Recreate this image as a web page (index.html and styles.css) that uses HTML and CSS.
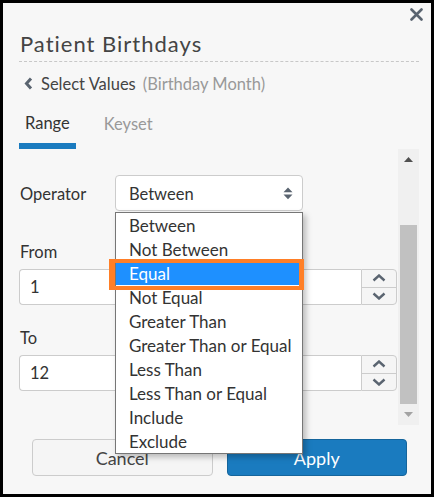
FILE: index.html
```html
<!DOCTYPE html>
<html>
<head>
<meta charset="utf-8">
<link rel="stylesheet" href="styles.css">
</head>
<body>
<div class="panel">
  <div class="topbar">
    <svg class="close" width="13" height="13" viewBox="0 0 13 13"><path d="M1.5 1.5 L11.5 11.5 M11.5 1.5 L1.5 11.5" stroke="#5a6470" stroke-width="2.6" stroke-linecap="round"/></svg>
  </div>
  <div class="title">Patient Birthdays</div>
  <div class="back">
    <svg class="chev" width="9" height="13" viewBox="0 0 9 13"><path d="M7 1.5 L2.5 6.5 L7 11.5" fill="none" stroke="#5a6470" stroke-width="3"/></svg>
    <span class="back-main">Select Values</span>
    <span class="back-sub">(Birthday Month)</span>
  </div>
  <div class="tabs">
    <div class="tab active">Range</div>
    <div class="tab">Keyset</div>
  </div>
  <div class="body">
    <div class="content">
      <div class="op-row">
        <div class="op-label">Operator</div>
        <div class="select">
          <span>Between</span>
          <svg width="10" height="13" viewBox="0 0 10 13"><path d="M5 0.5 L9.5 5.2 L0.5 5.2 Z M0.5 7.4 L9.5 7.4 L5 12.2 Z" fill="#5a6470"/></svg>
        </div>
      </div>
      <div class="label from">From</div>
      <div class="num">
        <div class="num-input">1</div>
        <div class="spin">
          <div class="spin-btn"><svg width="14" height="8" viewBox="0 0 14 8"><path d="M1.5 6.5 L7 1.5 L12.5 6.5" fill="none" stroke="#5a6470" stroke-width="2.4"/></svg></div>
          <div class="spin-btn"><svg width="14" height="8" viewBox="0 0 14 8"><path d="M1.5 1.5 L7 6.5 L12.5 1.5" fill="none" stroke="#5a6470" stroke-width="2.4"/></svg></div>
        </div>
      </div>
      <div class="label to">To</div>
      <div class="num">
        <div class="num-input">12</div>
        <div class="spin">
          <div class="spin-btn"><svg width="14" height="8" viewBox="0 0 14 8"><path d="M1.5 6.5 L7 1.5 L12.5 6.5" fill="none" stroke="#5a6470" stroke-width="2.4"/></svg></div>
          <div class="spin-btn"><svg width="14" height="8" viewBox="0 0 14 8"><path d="M1.5 1.5 L7 6.5 L12.5 1.5" fill="none" stroke="#5a6470" stroke-width="2.4"/></svg></div>
        </div>
      </div>
    </div>
    <div class="scrollbar">
      <div class="sb-arrow"><svg width="9" height="5" viewBox="0 0 9 5"><path d="M4.5 0 L9 5 L0 5 Z" fill="#505050"/></svg></div>
      <div class="sb-space"></div>
      <div class="sb-thumb"></div>
      <div class="sb-arrow"><svg width="9" height="5" viewBox="0 0 9 5"><path d="M0 0 L9 0 L4.5 5 Z" fill="#a3a3a3"/></svg></div>
    </div>
  </div>
  <div class="footer">
    <div class="btn cancel">Cancel</div>
    <div class="btn apply">Apply</div>
  </div>

  <div class="dropdown">
    <div class="opt">Between</div>
    <div class="opt">Not Between</div>
    <div class="opt sel">Equal</div>
    <div class="opt">Not Equal</div>
    <div class="opt">Greater Than</div>
    <div class="opt">Greater Than or Equal</div>
    <div class="opt">Less Than</div>
    <div class="opt">Less Than or Equal</div>
    <div class="opt">Include</div>
    <div class="opt">Exclude</div>
  </div>
  <div class="highlight"></div>
</div>
</body>
</html>
```
FILE: styles.css
```css
* { box-sizing: border-box; }
html, body { margin: 0; padding: 0; }
body {
  background: #000;
  padding: 3px 3px 3px 3px;
  width: 434px;
  height: 497px;
  font-family: "Lato", "Liberation Sans", sans-serif;
  color: #333;
}
.panel {
  position: relative;
  width: 428px;
  height: 491px;
  background: #f7f7f7;
  padding: 0 12px 0 16px;
  display: flex;
  flex-direction: column;
}
.topbar {
  height: 27px;
  display: flex;
  justify-content: flex-end;
  padding-top: 5px;
  margin-right: -4px;
}
.close { display: block; }
.title {
  height: 32px;
  line-height: 28px;
  font-size: 22px;
  letter-spacing: 1px;
  color: #444;
  padding-left: 1px;
  padding-bottom: 4px;
  border-bottom: 1px dashed #c8c8c8;
}
.back {
  height: 42px;
  display: flex;
  align-items: center;
  font-size: 16.5px;
  padding-left: 5px;
  padding-top: 1px;
}
.chev { margin-right: 8px; }
.back-main { color: #444; }
.back-sub { color: #999; margin-left: 7px; }
.tabs {
  height: 45px;
  display: flex;
  align-items: flex-end;
  gap: 22px;
}
.tab {
  font-size: 16.5px;
  color: #999;
  padding: 0 6px;
  height: 44px;
  line-height: 38px;
  border-bottom: 6px solid transparent;
}
.tab.active {
  color: #333;
  border-bottom-color: #1a7bbf;
  height: 45px;
  line-height: 39px;
}
.body {
  height: 276px;
  display: flex;
}
.content {
  width: 379px;
  padding-top: 26px;
  display: flex;
  flex-direction: column;
}
.op-row {
  display: flex;
  align-items: center;
  height: 36px;
}
.op-label {
  width: 96px;
  font-size: 16.5px;
  padding-left: 1px;
  padding-top: 2px;
}
.select {
  width: 188px;
  height: 36px;
  border: 1px solid #ccc;
  border-radius: 4px;
  background: #fff;
  display: flex;
  align-items: center;
  justify-content: space-between;
  padding: 1px 9px 0 13px;
  font-size: 16.5px;
}
.label {
  font-size: 16.5px;
  height: 22px;
  line-height: 22px;
  padding-left: 1px;
  padding-top: 2px;
}
.label.from { margin-top: 28px; }
.label.to { margin-top: 20px; }
.num {
  margin-top: 8px;
  height: 36px;
  width: 378px;
  display: flex;
}
.num-input {
  flex: 1;
  background: #fff;
  border: 1px solid #ccc;
  border-right: none;
  border-radius: 4px 0 0 4px;
  font-size: 16.5px;
  line-height: 35px;
  padding-left: 10px;
}
.spin {
  width: 36px;
  display: flex;
  flex-direction: column;
  border: 1px solid #ccc;
  border-radius: 0 4px 4px 0;
  background: #f5f5f5;
}
.spin-btn {
  flex: 1;
  display: flex;
  align-items: center;
  justify-content: center;
}
.spin-btn + .spin-btn { border-top: 1px solid #ccc; }
.scrollbar {
  width: 21px;
  background: #f0f0f0;
  display: flex;
  flex-direction: column;
}
.sb-arrow {
  height: 20px;
  display: flex;
  align-items: center;
  justify-content: center;
}
.sb-space { height: 56px; }
.sb-thumb {
  height: 179px;
  margin: 0 2px;
  background: #c1c1c1;
}
.footer {
  margin: 14px 12px 0 13px;
  display: flex;
  gap: 14px;
}
.btn {
  flex: 1;
  height: 37px;
  border-radius: 4px;
  font-size: 18px;
  display: flex;
  align-items: center;
  justify-content: center;
}
.cancel {
  background: #f5f5f5;
  border: 1px solid #ccc;
  color: #444;
}
.apply {
  background: #1a7bbf;
  border: 1px solid #15659c;
  color: #fff;
}
.dropdown {
  position: absolute;
  left: 112px;
  top: 209px;
  width: 188px;
  height: 242px;
  background: #fff;
  border: 1px solid #767676;
  box-shadow: 3px 3px 6px rgba(0,0,0,0.25);
}
.opt {
  height: 24px;
  line-height: 26px;
  font-size: 17px;
  padding-left: 13px;
  color: #333;
}
.opt.sel {
  background: #1e90ff;
  color: #fff;
}
.highlight {
  position: absolute;
  left: 106px;
  top: 256px;
  width: 195px;
  height: 31px;
  border: 4px solid #ff7f27;
  border-left-width: 6px;
  border-right-width: 5px;
}
```
